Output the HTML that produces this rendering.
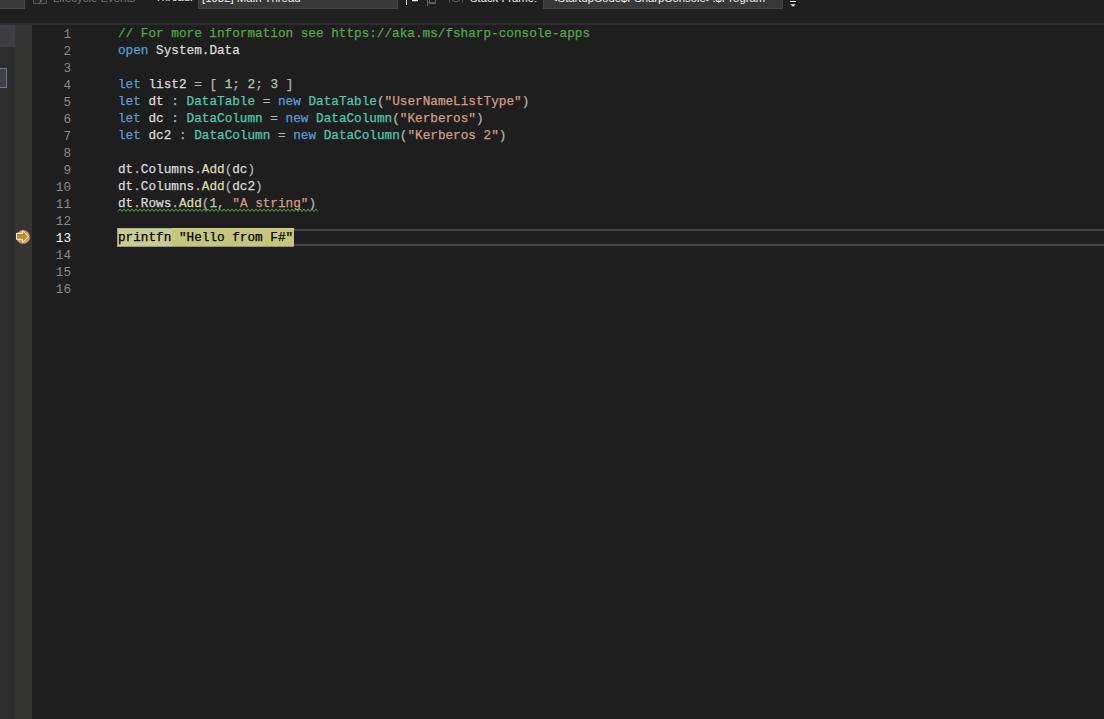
<!DOCTYPE html>
<html><head><meta charset="utf-8">
<style>
html,body{margin:0;padding:0;}
body{width:1104px;height:719px;overflow:hidden;background:#1e1e1e;position:relative;font-family:"Liberation Sans",sans-serif;}
.abs{position:absolute;}
#tb{left:0;top:0;width:1104px;height:23px;background:#1f1f1f;}
#sep{left:0;top:23px;width:1104px;height:2px;background:#2d2d2d;}
.lbl{position:absolute;font-size:12px;line-height:12px;white-space:pre;color:#f1f1f1;}
.cb{position:absolute;background:#383838;border:1px solid #474747;box-sizing:border-box;}
#lstrip{left:0;top:25px;width:15px;height:694px;background:#2d2d2d;}
#glyph{left:15px;top:25px;width:17px;height:694px;background:#343432;}
#editor{left:32px;top:25px;width:1072px;height:694px;background:#1e1e1e;}
.ln{position:absolute;left:32px;width:39px;text-align:right;font-family:"Liberation Mono",monospace;font-size:12.7px;line-height:17px;color:#8a8a8a;white-space:pre;}
.code{position:absolute;left:118px;-webkit-text-stroke:0.25px currentColor;font-family:"Liberation Mono",monospace;font-size:12.7px;line-height:17px;color:#dcdcdc;white-space:pre;}
.k{color:#569cd6}.t{color:#4ec9b0}.s{color:#d69d85}.n{color:#b5cea8}.c{color:#57a64a}.o{color:#b4b4b4}.m{color:#dcdcaa}
</style></head><body>
<div id="tb" class="abs"></div>
<div id="sep" class="abs"></div>
<div id="lstrip" class="abs"></div>
<div id="glyph" class="abs"></div>
<div id="editor" class="abs"></div>

<!-- left strip pieces -->
<div class="abs" style="left:0;top:25px;width:15px;height:22px;background:#3e3e42;"></div>
<div class="abs" style="left:-1px;top:68px;width:8px;height:20px;background:#3f3f46;border:1px solid #6f7b7b;box-sizing:border-box;"></div>

<!-- toolbar -->
<div class="abs" style="left:-1px;top:-1px;width:26px;height:10px;background:#3a3a3a;border:1px solid #4a4a4a;box-sizing:border-box;"></div>
<svg class="abs" style="left:33px;top:-6px;" width="14" height="11" viewBox="0 0 14 11"><rect x="0.5" y="0.5" width="13" height="9" fill="#2a2622" stroke="#555" stroke-width="1"/><path d="M8.5 1 L5 6 L7.5 6 L6 10.5 L10 4.5 L7.5 4.5 Z" fill="#8a8a8a"/></svg>
<div class="lbl" style="left:53px;top:-8.3px;color:#767676;font-size:11.4px;">Lifecycle Events</div>
<div class="lbl" style="left:155px;top:-8.8px;font-size:11px;">Thread:</div>
<div class="cb" style="left:198px;top:-1px;width:200px;height:10px;"></div>
<div class="lbl" style="left:202px;top:-8.4px;font-size:11.4px;">[1932] Main Thread</div>
<svg class="abs" style="left:400px;top:0;" width="70" height="10" viewBox="0 0 70 10">
<rect x="5" y="-1" width="3" height="7" fill="#0e0e0e"/><rect x="6" y="0" width="1" height="5" fill="#f2f2f2"/>
<rect x="11" y="-1" width="8" height="3" fill="#0e0e0e"/><rect x="12" y="0" width="6" height="1.3" fill="#f2f2ea"/>
<path d="M27.5 0 V6 M27.5 2.8 H35 M29.5 0 V3.5 H35.5 V0" stroke="#6a6460" stroke-width="1" fill="none"/>
<path d="M49.5 0 V2.5 M62.5 0 V2.5 M52 0.5 Q56 2.8 60 0.5" stroke="#5a5a5a" stroke-width="1" fill="none"/>
</svg>
<div class="lbl" style="left:470px;top:-8.5px;font-size:11.3px;">Stack Frame:</div>
<div class="cb" style="left:543px;top:-1px;width:240px;height:10px;"></div>
<div class="lbl" style="left:551px;top:-8px;font-size:11.3px;">&lt;StartupCode$FSharpConsole&gt;.$Program</div>
<svg class="abs" style="left:788px;top:0;" width="10" height="9" viewBox="0 0 10 9">
<rect x="1" y="-1" width="8" height="1" fill="#050505"/><rect x="2" y="1" width="6" height="1.2" fill="#f0f0f0"/><rect x="1" y="2.3" width="8" height="1.2" fill="#050505"/>
<path d="M1.6 3.9 L8.4 3.9 L5 7.1 Z" fill="#eeeeee" stroke="#0a0a0a" stroke-width="0.5"/>
</svg>

<!-- line numbers -->
<div class="ln" style="top:26px;">1
2
3
4
5
6
7
8
9
10
11
12
<span style="color:#ffffff">13</span>
14
15
16</div>

<!-- current line border -->
<div class="abs" style="left:117px;top:229px;width:990px;height:17px;border:2px solid #464646;box-sizing:border-box;"></div>
<div class="abs" style="left:117px;top:228px;width:177px;height:19px;background:#c4c67e;border-left:1px solid #98a294;border-bottom:1px solid #8f9478;border-top:1px solid #ccce8c;box-sizing:border-box;"></div>
<div class="abs" style="left:118px;top:228px;width:54px;height:19px;background:#cacd8f;border-top:1px solid #a8b2a2;border-bottom:1px solid #929c94;box-sizing:border-box;"></div>
<div class="code" style="top:25px;"><span class="c">// For more information see https://aka.ms/fsharp-console-apps</span>
<span class="k">open</span> System.Data

<span class="k">let</span> list2 <span class="o">=</span> <span class="o">[</span> <span class="n">1</span><span class="o">;</span> <span class="n">2</span><span class="o">;</span> <span class="n">3</span> <span class="o">]</span>
<span class="k">let</span> dt <span class="o">:</span> <span class="t">DataTable</span> <span class="o">=</span> <span class="k">new</span> <span class="t">DataTable</span><span class="o">(</span><span class="s">"UserNameListType"</span><span class="o">)</span>
<span class="k">let</span> dc <span class="o">:</span> <span class="t">DataColumn</span> <span class="o">=</span> <span class="k">new</span> <span class="t">DataColumn</span><span class="o">(</span><span class="s">"Kerberos"</span><span class="o">)</span>
<span class="k">let</span> dc2 <span class="o">:</span> <span class="t">DataColumn</span> <span class="o">=</span> <span class="k">new</span> <span class="t">DataColumn</span><span class="o">(</span><span class="s">"Kerberos 2"</span><span class="o">)</span>

dt<span class="o">.</span>Columns<span class="o">.</span><span class="m">Add</span><span class="o">(</span>dc<span class="o">)</span>
dt<span class="o">.</span>Columns<span class="o">.</span><span class="m">Add</span><span class="o">(</span>dc2<span class="o">)</span>
dt<span class="o">.</span>Rows<span class="o">.</span><span class="m">Add</span><span class="o">(</span><span class="n">1</span><span class="o">,</span> <span class="s">"A string"</span><span class="o">)</span>

<span style="color:#000000">printfn "Hello from F#"</span>


</div>

<!-- squiggle -->
<svg class="abs" style="left:118px;top:208.3px;" width="200" height="5" viewBox="0 0 200 5"><path d="M0 3.5 L2 1 L4 3.5 L6 1 L8 3.5 L10 1 L12 3.5 L14 1 L16 3.5 L18 1 L20 3.5 L22 1 L24 3.5 L26 1 L28 3.5 L30 1 L32 3.5 L34 1 L36 3.5 L38 1 L40 3.5 L42 1 L44 3.5 L46 1 L48 3.5 L50 1 L52 3.5 L54 1 L56 3.5 L58 1 L60 3.5 L62 1 L64 3.5 L66 1 L68 3.5 L70 1 L72 3.5 L74 1 L76 3.5 L78 1 L80 3.5 L82 1 L84 3.5 L86 1 L88 3.5 L90 1 L92 3.5 L94 1 L96 3.5 L98 1 L100 3.5 L102 1 L104 3.5 L106 1 L108 3.5 L110 1 L112 3.5 L114 1 L116 3.5 L118 1 L120 3.5 L122 1 L124 3.5 L126 1 L128 3.5 L130 1 L132 3.5 L134 1 L136 3.5 L138 1 L140 3.5 L142 1 L144 3.5 L146 1 L148 3.5 L150 1 L152 3.5 L154 1 L156 3.5 L158 1 L160 3.5 L162 1 L164 3.5 L166 1 L168 3.5 L170 1 L172 3.5 L174 1 L176 3.5 L178 1 L180 3.5 L182 1 L184 3.5 L186 1 L188 3.5 L190 1 L192 3.5 L194 1 L196 3.5 L198 1 L200 3.5" stroke="#5aab4c" stroke-width="0.95" fill="none"/></svg>
<!-- breakpoint arrow -->
<svg class="abs" style="left:12px;top:226px;" width="22" height="22" viewBox="0 0 22 22">
<circle cx="11.1" cy="10.9" r="6.7" fill="#e2a275" stroke="#c9703e" stroke-width="0.7"/>
<path d="M4.5 7.4 H10.7 V4.6 L16.2 10.4 L10.7 16.2 V13.3 H4.5 Z" fill="#c08a2a" stroke="#f2f0ea" stroke-width="1"/>
</svg>
</body></html>
